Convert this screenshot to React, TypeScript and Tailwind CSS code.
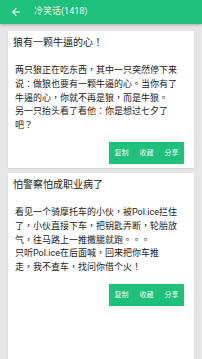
import React from "react";

type Joke = {
  id: number;
  title: string;
  lines: string[];
};

const JOKES: Joke[] = [
  {
    id: 1,
    title: "狼有一颗牛逼的心！",
    lines: [
      "两只狼正在吃东西，其中一只突然停下来",
      "说：做狼也要有一颗牛逼的心。当你有了",
      "牛逼的心，你就不再是狼，而是牛狼。",
      "另一只抬头看了看他：你是想过七夕了",
      "吧？",
    ],
  },
  {
    id: 2,
    title: "怕警察怕成职业病了",
    lines: [
      "看见一个骑摩托车的小伙，被Pol.ice拦住",
      "了，小伙直接下车，把钥匙弄断，轮胎放",
      "气，往马路上一推撒腿就跑。。。",
      "只听Pol.ice在后面喊，回来把你车推",
      "走，我不查车，找问你借个火！",
    ],
  },
];

const ACTIONS = ["复制", "收藏", "分享"];

function JokeCard({ joke, grow }: { joke: Joke; grow?: boolean }) {
  return (
    <div
      className={`bg-white pt-[5px] pb-[3.75px] shadow-[0_1px_1px_rgba(0,0,0,0.08)] ${
        grow ? "flex-1" : ""
      }`}
    >
      <h2 className="px-[5px] text-[10px] leading-[14px] text-[#1a1a1a]">
        {joke.title}
      </h2>
      <div className="mt-[14px] px-[7px] text-[9px] leading-[13.75px] text-[#222222]">
        {joke.lines.map((line, i) => (
          <div key={i} className="whitespace-nowrap">
            {line}
          </div>
        ))}
      </div>
      <div className="mt-[9px] flex justify-end pr-[10px]">
        <div className="flex h-[22.5px] bg-[#1fbf7c] shadow-[0_0_1px_rgba(0,0,0,0.25)]">
          {ACTIONS.map((a) => (
            <button
              key={a}
              className="w-[25px] text-center text-[7px] leading-[22.5px] text-white/90"
            >
              {a}
            </button>
          ))}
        </div>
      </div>
    </div>
  );
}

export default function App() {
  return (
    <div
      className="flex min-h-screen flex-col bg-[#e5e5e5]"
      style={{ fontFamily: "Roboto, 'Noto Sans CJK TC', sans-serif" }}
    >
      {/* Toolbar */}
      <header className="relative z-10 flex h-[24px] items-center bg-[#1fbf7c] pl-[10px] shadow-[0_1px_3px_rgba(0,0,0,0.25)]">
        <svg width="12" height="12" viewBox="0 0 24 24" fill="white">
          <path d="M20 11H7.83l5.59-5.59L12 4l-8 8 8 8 1.41-1.41L7.83 13H20v-2z" />
        </svg>
        <span className="ml-[12px] text-[9px] text-white/95">冷笑话(1418)</span>
      </header>

      {/* List */}
      <div className="flex flex-1 flex-col gap-[5px] px-[8px] pt-[7px]">
        {JOKES.map((j, i) => (
          <JokeCard key={j.id} joke={j} grow={i === JOKES.length - 1} />
        ))}
      </div>
    </div>
  );
}
